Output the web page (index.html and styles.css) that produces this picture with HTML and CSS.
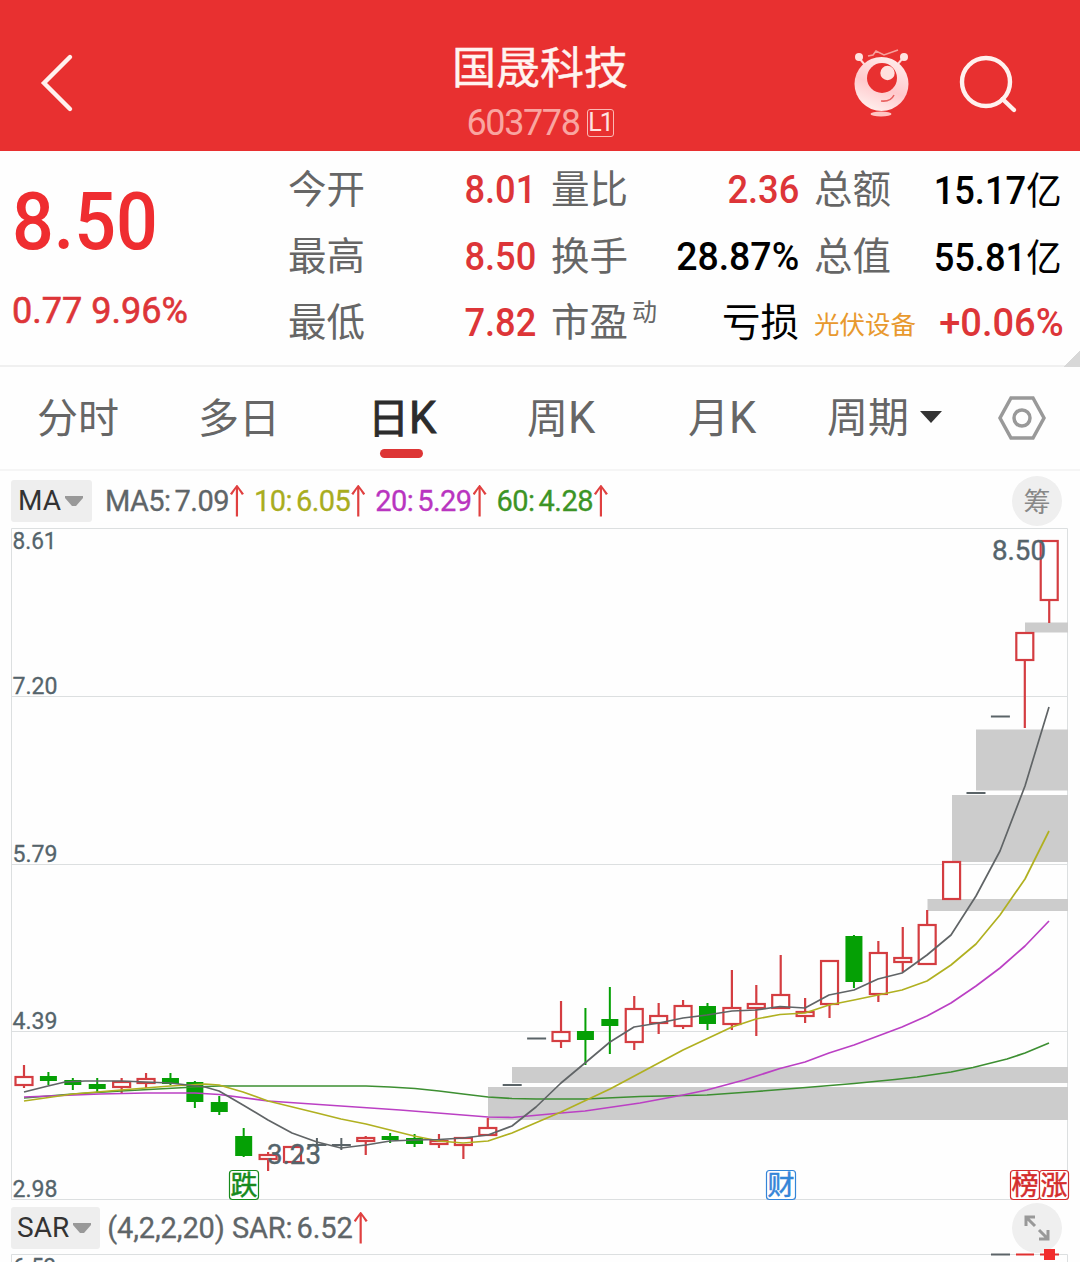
FILE: index.html
```html
<!DOCTYPE html>
<html lang="zh-CN">
<head>
    <meta charset="UTF-8">
    <meta name="viewport" content="width=device-width, initial-scale=1.0">
    <title>国晟科技 603778</title>
    <link rel="stylesheet" href="styles.css">
</head>
<body>

<header class="header">
    <svg class="back" width="36" height="60" viewBox="0 0 36 60"><path d="M32 4 L6 30 L32 56"/></svg>
    <div class="title">
        <h1>国晟科技</h1>
        <div class="code"><span>603778</span><i>L1</i></div>
    </div>
    <svg class="robot" width="60" height="72" viewBox="0 0 60 72">
        <defs>
            <linearGradient id="skin" x1="0.7" y1="0" x2="0.3" y2="1">
                <stop offset="0" stop-color="#ffeceb"/>
                <stop offset="0.55" stop-color="#ffc9cc"/>
                <stop offset="1" stop-color="#fff0ee"/>
            </linearGradient>
        </defs>
        <path d="M8 11 L14 18 M52 11 L46 18" stroke="#ffd9d6" stroke-width="2"/>
        <circle cx="8" cy="10" r="4" fill="#ffe3e0"/>
        <circle cx="53" cy="10" r="4" fill="#ffe3e0"/>
        <path d="M17 9 L22 8 L25 4 L33 8 L47 3" fill="none" stroke="#f6a09c" stroke-width="1.6"/>
        <circle cx="30.500" cy="37" r="27" fill="url(#skin)"/>
        <circle cx="31" cy="31" r="15" fill="#e83030"/>
        <circle cx="36.500" cy="26" r="7.200" fill="#ffe0de"/>
        <path d="M30 54 Q40 55 43 48" fill="none" stroke="#e8605f" stroke-width="1.500"/>
        <ellipse cx="30" cy="67" rx="10.500" ry="2.500" fill="#ffc6c3"/>
    </svg>
    <svg class="search" width="60" height="60" viewBox="0 0 60 60">
        <circle cx="28" cy="28" r="24"/>
        <path d="M44.500 45 L56 56"/>
    </svg>
</header>

<section class="quote">
    <div class="price">
        <div class="last"><b class="num">8.50</b></div>
        <div class="change"><span class="num">0.77 9.96%</span></div>
    </div>
    <div class="stats">
        <div class="stat"><label>今开</label><span class="num up">8.01</span></div>
        <div class="stat"><label>量比</label><span class="num up">2.36</span></div>
        <div class="stat"><label>总额</label><span class="num low">15.17<em>亿</em></span></div>
        <div class="stat"><label>最高</label><span class="num up">8.50</span></div>
        <div class="stat"><label>换手</label><span class="num">28.87%</span></div>
        <div class="stat"><label>总值</label><span class="num low">55.81<em>亿</em></span></div>
        <div class="stat"><label>最低</label><span class="num up">7.82</span></div>
        <div class="stat"><label>市盈<sup>动</sup></label><span class="loss">亏损</span></div>
        <div class="stat"><label class="sector">光伏设备</label><span class="num up percent">+0.06%</span></div>
    </div>
    <div class="corner"></div>
</section>

<nav class="tabs">
    <a>分时</a>
    <a>多日</a>
    <a class="active">日<span>K</span></a>
    <a>周<span>K</span></a>
    <a>月<span>K</span></a>
    <a class="period">周期<svg width="24" height="14" viewBox="0 0 24 14"><path d="M1 1 H23 L12 13 Z" fill="#333"/></svg></a>
    <svg class="setting" width="48" height="46" viewBox="0 0 48 46">
        <path d="M13 3 H35 L46 23 L35 43 H13 L2 23 Z"/>
        <circle cx="24" cy="23" r="8"/>
    </svg>
</nav>

<div class="indicator ma">
    <button class="chip"><span>MA</span><svg width="18" height="12" viewBox="0 0 18 12"><path d="M0 1 H18 V3 L11 11 H7 L0 3 Z" fill="#999"/></svg></button>
    <div class="values">
        <span class="ma5">MA5:<b>7.09</b></span>
        <span class="ma10">10:<b>6.05</b></span>
        <span class="ma20">20:<b>5.29</b></span>
        <span class="ma60">60:<b>4.28</b></span>
    </div>
    <div class="round">筹</div>
</div>

<svg class="chart" id="chart" width="1080" height="673" viewBox="0 528 1080 673"></svg>

<div class="indicator sar">
    <button class="chip"><span>SAR</span><svg width="18" height="12" viewBox="0 0 18 12"><path d="M0 1 H18 V3 L11 11 H7 L0 3 Z" fill="#999"/></svg></button>
    <div class="values">
        <span class="ma5">(4,2,2,20) SAR:<b>6.52</b></span>
    </div>
    <div class="round">
        <svg width="28" height="28" viewBox="0 0 28 28"><path d="M3 12 V3 H12 M3 3 L12 12 M25 16 V25 H16 M25 25 L16 16"/></svg>
    </div>
</div>

<svg class="chart" width="1080" height="13" viewBox="0 1249 1080 13">
    <path class="grid" d="M11.500 1270 V1254.500 H1067.500 V1270"/>
    <text class="axis" x="13" y="1275" textLength="43" lengthAdjust="spacingAndGlyphs">6.52</text>
    <path d="M991 1254.500 H1010" stroke="#5c6468" stroke-width="2"/>
    <path d="M1016 1254.500 H1034 M1040 1254.500 H1059" stroke="#e03030" stroke-width="2"/>
    <rect x="1044" y="1249" width="11" height="11" fill="#f22c2c"/>
</svg>

<script src="chart.js"></script>
</body>
</html>
```

FILE: styles.css
```css
* {
    box-sizing: border-box;
}
body {
    margin: 0;
    width: 1080px;
    height: 1262px;
    overflow: hidden;
    background: #fefefe;
    color: #000;
    font-family: Roboto, "Noto Sans CJK SC", sans-serif;
}
svg {
    display: block;
    flex: none;
}

/* header */
.header {
    display: flex;
    height: 151px;
    padding-left: 38px;
    background: #e83030;
}
.back {
    margin-top: 53px;
}
.back path,
.search path,
.search circle {
    fill: none;
    stroke: #fff1ee;
    stroke-width: 4.4;
    stroke-linecap: round;
}
.title {
    width: 300px;
    margin-left: 316px;
    text-align: center;
    color: #fff3f0;
}
.title h1 {
    margin: 37px 0 0;
    font-size: 44px;
    font-weight: 400;
    line-height: 64px;
    -webkit-text-stroke: 0.4px;
}
.code {
    display: flex;
    justify-content: center;
    align-items: center;
    gap: 7px;
    height: 44px;
    font-size: 36px;
    color: #f9a5a0;
}
.code span {
    letter-spacing: -1.4px;
}
.code i {
    width: 27px;
    height: 28px;
    border: 1.5px solid #fbb9b4;
    border-radius: 3px;
    font-size: 25px;
    font-style: normal;
    line-height: 26px;
    letter-spacing: -2px;
    color: #ffe3e0;
}
.robot {
    margin: 47px 0 0 161px;
}
.search {
    margin: 54px 0 0 47px;
}

/* quote */
.quote {
    display: flex;
    position: relative;
    height: 216px;
    border-bottom: 2px solid #f0f0f0;
}
.num {
    display: inline-block;
    font-weight: 500;
    white-space: nowrap;
    transform-origin: right center;
}
.up,
.price {
    color: #dd3538;
}
.price {
    width: 288px;
    padding-left: 12px;
}
.price .num {
    transform-origin: left center;
}
.last {
    height: 96px;
    margin-top: 23px;
    font-size: 80px;
    line-height: 96px;
    color: #ef2d30;
}
.last .num {
    transform: scaleX(0.92);
}
.change {
    margin-top: 20px;
    font-size: 37px;
    line-height: 42px;
}
.change .num {
    font-weight: 400;
    transform: scaleX(0.975);
    -webkit-text-stroke: 0.6px;
}
.stats {
    display: grid;
    grid-template-columns: 248px 248px 248px;
    grid-template-rows: 67px 66px 66px;
    column-gap: 15px;
    padding-top: 5px;
}
.stat {
    display: flex;
    justify-content: space-between;
    font-size: 38.5px;
    line-height: 67px;
}
.stat .num {
    font-size: 39px;
    line-height: 68px;
    transform: scaleX(0.96);
}
.stat .up {
    transform: scaleX(0.93);
}
.stat .percent {
    margin-right: -2px;
    transform: scaleX(0.975);
}
.stat .low {
    line-height: 71px;
    transform: scaleX(0.93);
}
.stat em {
    font-size: 38px;
    font-style: normal;
    font-weight: 400;
}
.stat label {
    color: #666;
}
.stat sup {
    display: inline-block;
    margin-left: 4px;
    font-size: 25px;
    line-height: 30px;
    vertical-align: 15px;
}
.stat .sector {
    font-size: 25.5px;
    line-height: 72px;
    color: #e8992e;
    white-space: nowrap;
}
.corner {
    position: absolute;
    right: 0;
    bottom: -2px;
    width: 16px;
    height: 16px;
    background: linear-gradient(135deg, transparent 50%, #d8d8d8 50%);
}

/* tabs */
.tabs {
    display: flex;
    height: 104px;
    padding-left: 37px;
    border-bottom: 2px solid #f5f5f5;
    font-size: 41px;
    line-height: 105px;
    color: #666;
}
.tabs a {
    width: 161px;
    white-space: nowrap;
}
.tabs a span {
    font-size: 43.5px;
    line-height: 1;
}
.tabs .active {
    position: relative;
    width: 159px;
    margin-left: 9px;
    color: #2c2c2c;
    -webkit-text-stroke: 0.9px;
}
.tabs .active::after {
    content: "";
    position: absolute;
    left: 12px;
    top: 82px;
    width: 43px;
    height: 9px;
    border-radius: 5px;
    background: #dd3535;
}
.tabs .period {
    display: flex;
    align-items: center;
    gap: 10px;
    width: 171px;
    margin-left: -22px;
}
.period svg {
    margin-top: -2px;
}
.setting {
    margin-top: 28px;
    fill: none;
    stroke: #999;
    stroke-width: 3.5;
}

/* indicator rows */
.indicator {
    display: flex;
    align-items: center;
    padding: 0 18px 0 11px;
}
.ma {
    height: 57px;
    padding-top: 2px;
}
.sar {
    height: 48px;
    padding-top: 5px;
}
.chip {
    display: flex;
    align-items: center;
    gap: 4px;
    height: 42px;
    padding: 0 9px 0 7px;
    border: 0;
    border-radius: 3px;
    background: #eee;
    font: 28px Roboto, sans-serif;
    color: #333;
}
.values {
    display: flex;
    gap: 10px;
    margin-left: 13px;
    font-size: 29px;
    letter-spacing: -0.55px;
    white-space: nowrap;
    -webkit-text-stroke: 0.3px;
}
.sar .values {
    margin-left: 7px;
    letter-spacing: -0.1px;
}
.sar .chip {
    padding-left: 6px;
}
.values span {
    display: flex;
    align-items: center;
}
.values b {
    margin-left: 4px;
    font-weight: 400;
}
.values span::after {
    content: "";
    width: 14px;
    height: 32px;
    margin-left: 1px;
    background: #e04040;
    clip-path: path("M5.900 4.500 L2 10.500 L0 9.200 L7 0 L14 9.200 L12 10.500 L8.100 4.500 L8.100 32 L5.900 32 Z");
}
.ma5 { color: #5f6568; }
.ma10 { color: #a9ad1e; }
.ma20 { color: #b935c0; }
.ma60 { color: #3c9426; }
.round {
    display: flex;
    justify-content: center;
    align-items: center;
    width: 50px;
    height: 50px;
    margin-left: auto;
    border-radius: 50%;
    background: #efefef;
    font-size: 27px;
    color: #888;
}
.round path {
    fill: none;
    stroke: #999;
    stroke-width: 3;
}

/* chart */
.chart {
    overflow: visible;
}
.grid {
    fill: none;
    stroke: #dcdfe0;
    stroke-width: 1;
}
.gap {
    fill: #ccc;
}
.axis {
    font-size: 24px;
    fill: #55646b;
    stroke: #55646b;
    stroke-width: 0.3;
}
.mark {
    font-size: 27px;
    fill: #55646b;
    stroke: #55646b;
    stroke-width: 0.4;
}
.rise {
    fill: #fff;
    stroke: #d43d41;
    stroke-width: 2.2;
}
.fall {
    fill: #05a005;
    stroke: #05a005;
    stroke-width: 2;
}
.flat {
    fill: none;
    stroke: #5b6468;
    stroke-width: 2;
}
.line {
    fill: none;
    stroke-width: 1.7;
    stroke-linejoin: round;
}
.line5 { stroke: #606466; }
.line10 { stroke: #b0b020; }
.line20 { stroke: #bb40c4; }
.line60 { stroke: #3d8f32; }
.badge rect {
    fill: #fff;
    stroke: currentColor;
    stroke-width: 1.2;
}
.badge text {
    font-size: 27px;
    fill: currentColor;
    stroke: currentColor;
    stroke-width: 0.5;
}
.green { color: #168a1c; }
.blue { color: #3485d8; }
.red { color: #d42c2c; }
```

FILE: chart.js
```js
const chart = document.getElementById('chart');
const STEP = 24.41;
const LEFT = 24;

// type, high, body top, body bottom, low
const candles = [
    ['rise', 1065, 1076, 1086, 1088], ['fall', 1072, 1076, 1081, 1085],
    ['fall', 1078, 1080, 1085, 1090], ['fall', 1078, 1084, 1089, 1092],
    ['rise', 1078, 1081, 1088, 1093], ['rise', 1073, 1078, 1084, 1088],
    ['fall', 1073, 1078, 1084, 1085], ['fall', 1081, 1082, 1102, 1108],
    ['fall', 1096, 1102, 1112, 1115], ['fall', 1128, 1136, 1156, 1157],
    ['rise', 1152, 1154, 1160, 1171], ['rise', 1146, 1146, 1163, 1163],
    ['flat', 1138, 1144, 1146, 1147], ['flat', 1138, 1144, 1146, 1150],
    ['rise', 1136, 1137, 1142, 1155], ['fall', 1133, 1136, 1140, 1143],
    ['fall', 1134, 1138, 1144, 1147], ['rise', 1134, 1140, 1145, 1148],
    ['rise', 1137, 1137, 1146, 1159], ['rise', 1118, 1127, 1136, 1136],
    ['flat', 1085, 1084, 1086, 1085], ['flat', 1038, 1037, 1040, 1038],
    ['rise', 1001, 1031, 1042, 1048], ['fall', 1008, 1031, 1040, 1065],
    ['fall', 987, 1019, 1026, 1054], ['rise', 996, 1008, 1043, 1050],
    ['rise', 1003, 1015, 1024, 1034], ['rise', 1000, 1005, 1027, 1029],
    ['fall', 1003, 1006, 1024, 1030], ['rise', 970, 1007, 1025, 1030],
    ['rise', 985, 1003, 1009, 1036], ['rise', 955, 994, 1009, 1009],
    ['rise', 998, 1011, 1017, 1023], ['rise', 960, 960, 1005, 1018],
    ['fall', 935, 936, 982, 988], ['rise', 941, 952, 995, 1002],
    ['rise', 927, 957, 963, 972], ['rise', 910, 924, 965, 965],
    ['rise', 861, 861, 900, 900], ['flat', 793, 792, 794, 793],
    ['flat', 716, 715, 718, 716], ['rise', 632, 632, 661, 728],
    ['rise', 540, 540, 601, 623]
];

// left, top, bottom
const gaps = [
    [1025, 622.5, 632.5], [976, 729.5, 790.5], [952, 795, 862],
    [927.5, 899, 911], [512, 1067, 1083], [488, 1087, 1120]
];

const lines = {
    line60: '24,1098 73,1094 121,1091 195,1087 219,1086 341,1086 366,1086 390,1087 415,1088.500 439,1091 463,1094 488,1097 512,1098.500 536,1099 585,1099 640,1096.500 707,1095 756,1091.500 806,1087.500 854,1083.500 895,1079.500 917,1077 951,1072 973,1067.500 1007,1059 1025,1053 1049,1043',
    line20: '24,1097 100,1094 146,1093 195,1093 219,1094.500 268,1101 341,1106 400,1110 488,1117 512,1117.500 561,1113 585,1111 640,1103 683,1095 707,1090 744,1080 780,1068.500 805,1062 829,1053 854,1045 878,1036 902,1027 927,1016 951,1003 976,986 1000,968 1025,946 1049,921',
    line10: '24,1101 73,1094 121,1090 170,1086 205,1084 219,1085 243,1092 268,1101 317,1113 341,1119 366,1124 390,1130 414,1136 439,1141 463,1143 488,1141 512,1133 561,1112 610,1089 640,1073 683,1050 732,1027 756,1019 780,1014.500 805,1013 829,1005 854,1000 878,995 902,990 927,981 951,965 976,944 1000,915 1025,879 1049,831',
    line5: '24,1092 48,1086 65,1082 85,1081 121,1081 170,1083 205,1087 219,1091 243,1105 268,1120 292,1133 317,1142 341,1148 366,1145 390,1141 414,1140 439,1139.500 463,1138 488,1135 512,1126 536,1107 561,1083 585,1063 610,1042 634,1027 659,1023 683,1018 707,1015 732,1011 756,1010 780,1006.500 805,1008 829,995 854,990 878,979 902,973 927,955 951,935 976,896 1000,851 1025,786 1049,707'
};

const badges = [
    ['green', 229.5, '跌'], ['blue', 766.5, '财'], ['red', 1010.5, '榜'], ['red', 1039.5, '涨']
];

function text(cls, x, y, width, value) {
    return `<text class="${cls}" x="${x}" y="${y}" textLength="${width}" lengthAdjust="spacingAndGlyphs">${value}</text>`;
}

let html = '<path class="grid" d="M11.500 528.500 H1067.500 V1199.500 H11.500 Z M12 696.500 H1067 M12 864.500 H1067 M12 1031.500 H1067"/>';

gaps.forEach(([x, top, bottom]) => {
    html += `<rect class="gap" x="${x}" y="${top}" width="${1068 - x}" height="${bottom - top}"/>`;
});

candles.forEach(([type, high, top, bottom, low], i) => {
    const x = LEFT + STEP * i;
    if (type === 'flat') {
        const y = (top + bottom) / 2;
        html += `<path class="flat" d="M${x - 9.5} ${y} H${x + 9.5}${low - high > 2 ? ` M${x} ${high} V${low}` : ''}"/>`;
        return;
    }
    const half = type === 'rise' ? 8.5 : 7.5;
    html += `<path class="${type}" d="M${x} ${high} V${top} M${x} ${bottom} V${low}"/>`;
    html += `<rect class="${type}" x="${x - half}" y="${top + 1}" width="${half * 2}" height="${bottom - top - 2}"/>`;
});

Object.keys(lines).forEach(name => {
    html += `<polyline class="line ${name}" points="${lines[name]}"/>`;
});

html += text('axis', 12.5, 549, 44, '8.61');
html += text('axis', 12.5, 694, 45, '7.20');
html += text('axis', 12.5, 862, 45, '5.79');
html += text('axis', 12.5, 1029, 45, '4.39');
html += text('axis', 12.5, 1197, 45, '2.98');
html += text('mark', 992, 560, 54, '8.50');
html += text('mark', 267, 1164, 54, '3.23');

badges.forEach(([color, x, label]) => {
    html += `<g class="badge ${color}"><rect x="${x}" y="1170.500" width="29" height="29" rx="3"/><text x="${x + 1}" y="1195">${label}</text></g>`;
});

chart.innerHTML = html;
```
